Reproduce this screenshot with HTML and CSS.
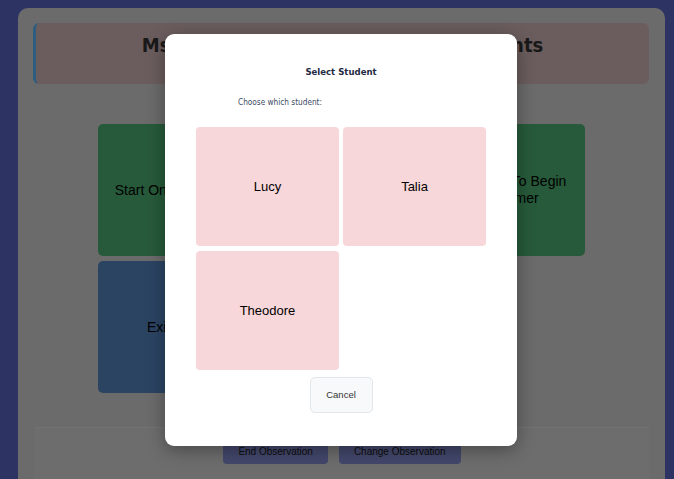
FILE: index.html
```html
<!DOCTYPE html>
<html>
<head>
<meta charset="utf-8">
<link rel="stylesheet" href="styles.css">
</head>
<body>
<div class="app">
  <div class="header">
    <h1 class="title">Ms Smith's Class — Observing Students</h1>
  </div>
  <div class="actions">
    <button class="action green">Start On-Task Timer</button>
    <button class="action green">Start Off-Task Timer</button>
    <button class="action green">Click Here To Begin Your Timer</button>
    <button class="action blue">Exit Page</button>
  </div>
  <div class="footer">
    <button class="foot-btn">End Observation</button>
    <button class="foot-btn">Change Observation</button>
  </div>
</div>
<div class="overlay">
  <div class="modal">
    <h2 class="modal-title">Select Student</h2>
    <p class="modal-label">Choose which student:</p>
    <div class="students">
      <button class="student">Lucy</button>
      <button class="student">Talia</button>
      <button class="student">Theodore</button>
    </div>
    <div class="modal-actions">
      <button class="cancel">Cancel</button>
    </div>
  </div>
</div>
</body>
</html>
```
FILE: styles.css
```css
* { box-sizing: border-box; }
html {
  height: 100%;
  background: #5a69c6;
}
body {
  position: relative;
  margin: 0;
  height: 479px;
  background: #5a69c6;
  font-family: "Liberation Sans", Arial, sans-serif;
  overflow: hidden;
}
button { font-family: "Liberation Sans", Arial, sans-serif; }
.app {
  margin: 8px 9px 0 18px;
  background: #d6d6d6;
  border-radius: 10px;
  padding: 15px 16px 0 15px;
  height: 540px;
}
.header {
  height: 61px;
  background: #d7bbbb;
  border-left: 3px solid #5abcff;
  border-radius: 6px;
  padding-top: 11px;
  text-align: center;
}
.title {
  margin: 0;
  font-family: "DejaVu Sans Condensed", "DejaVu Sans", sans-serif;
  font-stretch: condensed;
  font-size: 20px;
  line-height: 22px;
  font-weight: bold;
  color: #333;
}
.actions {
  margin-top: 40px;
  display: grid;
  grid-template-columns: repeat(3, 159px);
  grid-auto-rows: 132px;
  gap: 5px;
  justify-content: center;
}
.action {
  border: none;
  border-radius: 5px;
  font-size: 14px;
  line-height: 17px;
  color: #000;
  padding: 10px 16px;
}
.green { background: #4eb474; }
.blue { background: #5688c4; }
.footer {
  margin: 34px 0 0 2px;
  border-top: 1px solid #e4e4e4;
  background: #dadada;
  padding: 12px 0 40px;
  display: flex;
  justify-content: center;
  gap: 11px;
}
.foot-btn {
  background: #868ed6;
  border: none;
  border-radius: 4px;
  font-size: 10px;
  line-height: 12px;
  padding: 6px 15px;
  color: #1a1a1a;
}
.overlay {
  position: absolute;
  top: 0;
  left: 0;
  width: 100%;
  height: 100%;
  background: rgba(0, 0, 0, 0.5);
  display: flex;
  align-items: center;
  justify-content: center;
  padding-left: 8px;
}
.modal {
  width: 352px;
  height: 412px;
  background: #fff;
  border-radius: 9px;
  box-shadow: 0 4px 18px rgba(0, 0, 0, 0.35);
  padding: 32px 31px 32px;
}
.modal-title {
  margin: 0;
  text-align: center;
  font-family: "DejaVu Sans Condensed", "DejaVu Sans", sans-serif;
  font-stretch: condensed;
  font-size: 9.5px;
  line-height: 12px;
  font-weight: bold;
  color: #1f2a44;
}
.modal-label {
  margin: 18px 0 0 42px;
  font-family: "DejaVu Sans Condensed", "DejaVu Sans", sans-serif;
  font-stretch: condensed;
  font-size: 8.2px;
  line-height: 12px;
  color: #3b4a63;
}
.students {
  margin-top: 19px;
  display: grid;
  grid-template-columns: repeat(2, 143px);
  grid-auto-rows: 119px;
  gap: 5px 4px;
}
.student {
  background: #f8d7da;
  border: none;
  border-radius: 4px;
  font-size: 13px;
  color: #000;
}
.modal-actions {
  margin-top: 7px;
  display: flex;
  justify-content: center;
}
.cancel {
  width: 63px;
  height: 36px;
  background: #f8f9fa;
  border: 1px solid #e3e6ea;
  border-radius: 5px;
  font-size: 9.5px;
  color: #333;
}
```
